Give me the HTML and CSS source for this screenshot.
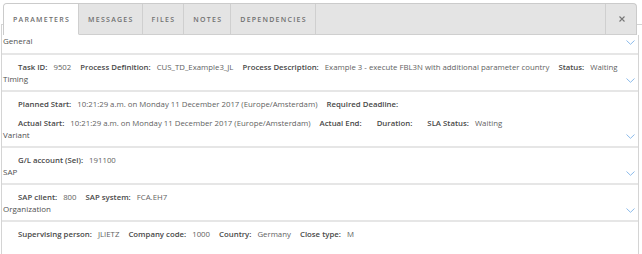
FILE: index.html
```html
<!DOCTYPE html>
<html>
<head>
    <title>Task details</title>
    <link rel="stylesheet" href="styles.css">
</head>
<body>
    <div class="widget">
        <ul class="tabs">
            <li class="tab active">Parameters</li>
            <li class="tab">Messages</li>
            <li class="tab">Files</li>
            <li class="tab">Notes</li>
            <li class="tab">Dependencies</li>
            <li class="tab-fill"></li>
            <li class="tab close">
                <svg width="6" height="6" viewBox="0 0 6 6"><path d="M0.5 0.5L5.5 5.5M5.5 0.5L0.5 5.5" stroke="#777" stroke-width="1.1"/></svg>
            </li>
        </ul>

        <div class="panel">
            <div class="group-head">
                <span>General</span>
                <svg class="chev" width="9" height="5" viewBox="0 0 9 5"><path d="M0.5 0.5L4.5 4.3L8.5 0.5" fill="none" stroke="#8cbbea" stroke-width="1"/></svg>
            </div>
            <div class="group-body">
                <div class="row">
                    <span class="lbl">Task ID:</span><span class="val">9502</span>
                    <span class="lbl">Process Definition:</span><span class="val">CUS_TD_Example3_JL</span>
                    <span class="lbl">Process Description:</span><span class="val">Example 3 - execute FBL3N with additional parameter country</span>
                    <span class="lbl">Status:</span><span class="val">Waiting</span>
                </div>
            </div>

            <div class="group-head">
                <span>Timing</span>
                <svg class="chev" width="9" height="5" viewBox="0 0 9 5"><path d="M0.5 0.5L4.5 4.3L8.5 0.5" fill="none" stroke="#8cbbea" stroke-width="1"/></svg>
            </div>
            <div class="group-body">
                <div class="row">
                    <span class="lbl">Planned Start:</span><span class="val">10:21:29 a.m. on Monday 11 December 2017 (Europe/Amsterdam)</span>
                    <span class="lbl">Required Deadline:</span>
                </div>
                <div class="row">
                    <span class="lbl">Actual Start:</span><span class="val">10:21:29 a.m. on Monday 11 December 2017 (Europe/Amsterdam)</span>
                    <span class="lbl">Actual End:</span><span class="val"></span>
                    <span class="lbl">Duration:</span><span class="val"></span>
                    <span class="lbl">SLA Status:</span><span class="val">Waiting</span>
                </div>
            </div>

            <div class="group-head">
                <span>Variant</span>
                <svg class="chev" width="9" height="5" viewBox="0 0 9 5"><path d="M0.5 0.5L4.5 4.3L8.5 0.5" fill="none" stroke="#8cbbea" stroke-width="1"/></svg>
            </div>
            <div class="group-body">
                <div class="row">
                    <span class="lbl">G/L account (Sel):</span><span class="val">191100</span>
                </div>
            </div>

            <div class="group-head">
                <span>SAP</span>
                <svg class="chev" width="9" height="5" viewBox="0 0 9 5"><path d="M0.5 0.5L4.5 4.3L8.5 0.5" fill="none" stroke="#8cbbea" stroke-width="1"/></svg>
            </div>
            <div class="group-body">
                <div class="row">
                    <span class="lbl">SAP client:</span><span class="val">800</span>
                    <span class="lbl">SAP system:</span><span class="val">FCA.EH7</span>
                </div>
            </div>

            <div class="group-head">
                <span>Organization</span>
                <svg class="chev" width="9" height="5" viewBox="0 0 9 5"><path d="M0.5 0.5L4.5 4.3L8.5 0.5" fill="none" stroke="#8cbbea" stroke-width="1"/></svg>
            </div>
            <div class="group-body">
                <div class="row">
                    <span class="lbl">Supervising person:</span><span class="val">JLIETZ</span>
                    <span class="lbl">Company code:</span><span class="val">1000</span>
                    <span class="lbl">Country:</span><span class="val">Germany</span>
                    <span class="lbl">Close type:</span><span class="val">M</span>
                </div>
            </div>
        </div>
    </div>
</body>
</html>
```

FILE: styles.css
```css
body {
    margin: 0;
    font-family: 'Open Sans', 'Liberation Sans', sans-serif;
    background-color: #ffffff;
    color: #555;
}

.widget {
    margin: 24px 0 0 1px;
    border-top: 1px solid #d4d4d4;
    border-left: 1px solid #d4d4d4;
    height: 229px;
}

/* tab strip */
.tabs {
    display: flex;
    list-style: none;
    margin: -22px 5px 0 1px;
    padding: 0;
    height: 31px;
    border: 1px solid #cbcbcb;
    border-bottom: none;
    border-radius: 4px 4px 0 0;
    background-color: #e4e4e4;
    overflow: hidden;
}

.tab {
    box-sizing: border-box;
    height: 31px;
    padding: 0 8px 0 9px;
    display: flex;
    align-items: center;
    justify-content: center;
    font-size: 7px;
    font-weight: 600;
    letter-spacing: 1.25px;
    text-transform: uppercase;
    color: #707070;
    border-right: 1px solid #cfcfcf;
    border-bottom: 1px solid #cfcfcf;
}

.tab.active {
    background-color: #ffffff;
    border-bottom-color: #ffffff;
}

.tab-fill {
    flex: 1;
    border-bottom: 1px solid #cfcfcf;
    box-sizing: border-box;
    height: 31px;
}

.tab.close {
    width: 31px;
    padding: 0 0 0 2px;
    border-right: none;
    border-left: 1px solid #cfcfcf;
}

/* groups */
.panel {
    margin-right: 3px;
    border-right: 1px solid #d4d4d4;
    height: 100%;
}

.group-head {
    display: flex;
    justify-content: space-between;
    align-items: flex-start;
    padding: 1px 3px 6px 1px;
    font-size: 8px;
    line-height: 10px;
    color: #505050;
    border-bottom: 2px solid #e6e6e6;
}

.group-head:first-child {
    padding-bottom: 7px;
}

.chev {
    margin-top: 4px;
}

.group-body {
    padding: 6px 0 0 16px;
}

.row {
    font-size: 7.8px;
    line-height: 12px;
    white-space: nowrap;
}

.row + .row {
    margin-top: 7px;
}

.lbl {
    font-weight: 600;
    color: #484848;
    margin-right: 6px;
}

.val {
    color: #626262;
    margin-right: 7px;
}
```
